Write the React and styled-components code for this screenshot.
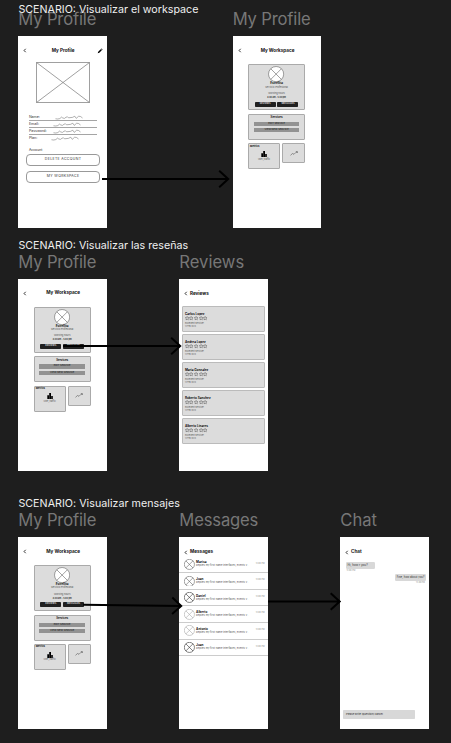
import React from 'react';
import styled, { createGlobalStyle } from 'styled-components';

const GlobalStyle = createGlobalStyle`
  * { box-sizing: border-box; }
  body { margin: 0; background: #1e1e1e; font-family: Inter, "Liberation Sans", sans-serif; }
  svg { display: block; flex: none; }
`;

const Canvas = styled.main`
  position: relative;
  width: 451px;
  height: 743px;
  overflow: hidden;
  background: #1e1e1e;
`;

const Scenario = styled.h2`
  position: absolute;
  left: 18.4px;
  top: ${(p) => p.$y}px;
  margin: 0;
  font-size: 10.7px;
  font-weight: 400;
  line-height: 14px;
  letter-spacing: ${(p) => p.$spacing ?? 0}px;
  color: #f0f0f0;
  white-space: nowrap;
`;

const Artboard = styled.section`
  position: absolute;
  left: ${(p) => p.$x}px;
  top: ${(p) => p.$y}px;
  width: 88.7px;
`;

const ArtboardName = styled.h3`
  margin: 0 0 7.3px;
  height: 20px;
  font-size: 16.6px;
  line-height: 20px;
  font-weight: 400;
  letter-spacing: ${(p) => p.$spacing || 0}px;
  color: #777;
  white-space: nowrap;
`;

const Screen = styled.div`
  display: flex;
  flex-direction: column;
  height: 192px;
  background: #fff;
  color: #111;
  overflow: hidden;
`;

const CenterHeader = styled.header`
  display: grid;
  grid-template-columns: 6px 1fr 6px;
  align-items: center;
  height: 10px;
  margin: 9.4px 4px 0 5px;
  text-align: center;
  font-size: 4.6px;
  line-height: 10px;
  font-weight: 700;
`;

const LeftHeader = styled.header`
  display: flex;
  align-items: center;
  gap: 1.7px;
  height: 10px;
  flex: none;
  margin: 10px 5px 0;
  font-size: 4.6px;
  line-height: 10px;
  font-weight: 700;
`;

const Photo = styled.div`
  margin: 6.1px 0 0 17.6px;
  height: 41px;
`;

const Fields = styled.div`
  margin: 11.6px 10px 0 10.6px;
`;

const Field = styled.div`
  display: flex;
  justify-content: space-between;
  align-items: center;
  height: 6.9px;
  padding-right: ${(p) => p.$inset}px;
  border-bottom: 1px solid ${(p) => (p.$last ? 'transparent' : '#a5a5a5')};
  font-size: 3.6px;
  line-height: 5px;
  color: #333;
`;

const SectionLabel = styled.div`
  margin: 6.3px 0 1.5px 10.6px;
  height: 4px;
  font-size: 3.4px;
  line-height: 4px;
  color: #222;
`;

const OutlineButton = styled.button`
  flex: none;
  width: 74px;
  height: 11.6px;
  margin: 0 0 5.6px 7.8px;
  padding: 0;
  border: 1px solid #999;
  border-radius: 4px;
  background: #fff;
  font: 400 3.5px/9px Inter, sans-serif;
  letter-spacing: 0.35px;
  color: #333;
  white-space: nowrap;
`;

const Dashboard = styled.div`
  display: flex;
  flex-direction: column;
  gap: 3.4px;
  width: 57px;
  margin: 8.6px 0 0 15.4px;
`;

const Card = styled.div`
  display: flex;
  flex-direction: column;
  align-items: center;
  width: ${(p) => p.$w || 57}px;
  height: ${(p) => p.$h}px;
  border: 1px solid #aaa;
  border-radius: 1px;
  background: #dcdcdc;
  white-space: nowrap;
`;

const AvatarSlot = styled.div`
  margin-top: 0.8px;
`;

const PersonName = styled.div`
  margin-top: -0.3px;
  font-size: 3px;
  line-height: 3.6px;
  font-weight: 700;
`;

const Tiny = styled.div`
  font-size: ${(p) => p.$size || 2.4}px;
  line-height: 3px;
  margin-top: ${(p) => p.$gap || 0}px;
  font-weight: ${(p) => (p.$strong ? 600 : 400)};
  color: ${(p) => (p.$strong ? '#222' : '#555')};
`;

const ActionRow = styled.div`
  display: flex;
  gap: 1.8px;
  margin-top: 2.6px;
`;

const DarkButton = styled.button`
  width: 21px;
  height: 4.9px;
  padding: 0;
  border: 0;
  border-radius: 0.7px;
  background: #202020;
  font: 600 2.4px/4.9px Inter, sans-serif;
  color: #ddd;
`;

const CardTitle = styled.div`
  margin: 0.6px 0 2.6px;
  font-size: 2.8px;
  line-height: 4px;
  font-weight: 700;
`;

const GrayButton = styled.button`
  width: 45.5px;
  height: 4.2px;
  margin-bottom: 2px;
  padding: 0;
  border: 0;
  background: #929292;
  font: 500 2.5px/4.2px Inter, sans-serif;
  color: #222;
`;

const Widgets = styled.div`
  display: flex;
  align-items: flex-start;
  justify-content: space-between;
`;

const WidgetTitle = styled.div`
  align-self: flex-start;
  margin: 0.5px 0 3.3px 1px;
  font-size: 2.5px;
  line-height: 3px;
  font-weight: 700;
`;

const Trend = styled.div`
  margin: auto;
`;

const ReviewList = styled.div`
  display: flex;
  flex-direction: column;
  gap: 2px;
  margin: 7.6px 2.8px 0;
`;

const Review = styled.article`
  height: 26px;
  padding: 4.8px 0 0 1.8px;
  border: 1px solid #bbb;
  border-radius: 1px;
  background: #dcdcdc;
  white-space: nowrap;
`;

const Reviewer = styled.div`
  font-size: 3.1px;
  line-height: 4px;
  font-weight: 700;
`;

const Stars = styled.div`
  display: flex;
  gap: 0.3px;
  margin: 0.2px 0 1.5px;
`;

const Message = styled.article`
  display: flex;
  align-items: center;
  height: 16.6px;
  flex: none;
  padding: 0 3.5px 0 4.5px;
  border-bottom: 1px solid #ccc;
  white-space: nowrap;
`;

const MessageBody = styled.div`
  flex: 1;
  min-width: 0;
  margin: 0 0 1px 1.5px;
`;

const MessageTime = styled.time`
  align-self: flex-start;
  margin-top: 5px;
  font-size: 2px;
  line-height: 3px;
  color: #888;
`;

const Inbox = styled.div`
  display: flex;
  flex-direction: column;
  margin-top: -0.6px;
`;

const Bubble = styled.div`
  align-self: ${(p) => (p.$mine ? 'flex-end' : 'flex-start')};
  width: ${(p) => (p.$mine ? 31 : 29)}px;
  height: 7px;
  margin: ${(p) => (p.$mine ? '1.3px 2.9px 0 0' : '4.4px 0 0 5.6px')};
  padding-left: 1.6px;
  border-radius: 1.3px;
  background: #d8d8d8;
  font-size: ${(p) => (p.$mine ? 2.75 : 3)}px;
  line-height: 7px;
  color: #333;
  white-space: nowrap;
`;

const Stamp = styled.time`
  align-self: ${(p) => (p.$mine ? 'flex-end' : 'flex-start')};
  margin: ${(p) => (p.$mine ? '0.7px 4.2px 0 0' : '0.7px 0 0 6.2px')};
  font-size: 2px;
  line-height: 3px;
  color: #888;
`;

const Composer = styled.div`
  width: 72.6px;
  height: 9.3px;
  margin: auto 0 10px 2.5px;
  padding-left: 3.2px;
  border-radius: 0.7px;
  background: #d8d8d8;
  font-size: 2.6px;
  line-height: 9.3px;
  color: #222;
`;

const Connectors = styled.svg`
  position: absolute;
  inset: 0;
  pointer-events: none;
`;

const Back = () => (
  <svg width="4" height="5" viewBox="0 0 4 5" fill="none" stroke="#000" strokeWidth="0.8">
    <path d="M2.7 .8 1.1 2.5 2.7 4.2" />
  </svg>
);

const Pencil = () => (
  <svg width="6" height="6" viewBox="0 0 6 6">
    <path d="M.7 5.3 1.2 3.7 3.7 1.2 4.8 2.3 2.3 4.8ZM4 .9 4.6.4 5.6 1.4 5.1 2Z" />
  </svg>
);

const Avatar = ({ size, color = '#666' }) => (
  <svg width={size} height={size} viewBox="0 0 16 16" fill="#fff" stroke={color} strokeWidth={size > 12 ? 0.6 : 0.9}>
    <circle cx="8" cy="8" r="7.5" />
    <path d="m2.7 2.7 10.6 10.6M13.3 2.7 2.7 13.3" />
  </svg>
);

const Squiggle = () => (
  <svg width="28" height="5" viewBox="0 0 29 5" fill="none" stroke="#777" strokeWidth="0.6">
    <path d="M.5 3.8Q3 4.5 5 3.6L7 2 8 3Q10 4.2 11.4 2.2L13 1.8 14 2.8 18 2.4 20.5 1.2 22 3.4 24.5 1.2 26.5 1.5 28.5 3" />
  </svg>
);

const Star = () => (
  <svg width="4.3" height="4.3" viewBox="0 0 10 10" fill="#eee" stroke="#333" strokeWidth="0.9">
    <path d="m5 .8 1.2 2.9 3.2.2-2.5 2 .8 3.1L5 7.3 2.3 9l.8-3.1-2.5-2 3.2-.2Z" />
  </svg>
);

const ScreenFrame = ({ name, x, y, spacing, children }) => (
  <Artboard $x={x} $y={y}>
    <ArtboardName $spacing={spacing}>{name}</ArtboardName>
    <Screen>{children}</Screen>
  </Artboard>
);

const fields = [['Name:', 14], ['Email:', 16], ['Password:', 16], ['Plan:', 17.5]];

const Profile = () => (
  <>
    <CenterHeader><Back /><span>My Profile</span><Pencil /></CenterHeader>
    <Photo>
      <svg width="54" height="41" viewBox="0 0 54 41" fill="none" stroke="#777" strokeWidth="0.7">
        <path d="M.5.5H53.5V40.5H.5ZL53.5 40.5M53.5.5.5 40.5" />
      </svg>
    </Photo>
    <Fields>
      {fields.map(([label, inset], i) => (
        <Field key={label} $inset={inset} $last={i === 3}><span>{label}</span><Squiggle /></Field>
      ))}
    </Fields>
    <SectionLabel>Account</SectionLabel>
    <OutlineButton>DELETE ACCOUNT</OutlineButton>
    <OutlineButton>MY WORKSPACE</OutlineButton>
  </>
);

const Workspace = () => (
  <>
    <CenterHeader><Back /><span>My Workspace</span><span /></CenterHeader>
    <Dashboard>
      <Card $h={46}>
        <AvatarSlot><Avatar size={16.2} /></AvatarSlot>
        <PersonName>Estrellita</PersonName>
        <Tiny>Servicio Profesional</Tiny>
        <Tiny $gap={3.3} $size={2.4}>Working hours</Tiny>
        <Tiny $gap={1} $size={2.1} $strong>8:00 am - 5:00 pm</Tiny>
        <ActionRow><DarkButton>REVIEWS</DarkButton><DarkButton>MESSAGES</DarkButton></ActionRow>
      </Card>
      <Card $h={26}>
        <CardTitle>Services</CardTitle>
        <GrayButton>EDIT SERVICE</GrayButton>
        <GrayButton>VIEW NEW SERVICE</GrayButton>
      </Card>
      <Widgets>
        <Card $w={32} $h={26}>
          <WidgetTitle>Metrics</WidgetTitle>
          <svg width="6" height="6" viewBox="0 0 6 6"><path d="M.3 2.2H2V6H.3ZM2.2 0H4V6H2.2ZM4.2 3H5.8V6H4.2Z" /></svg>
          <Tiny $gap={0.5} $size={2.3}>user_traffic</Tiny>
        </Card>
        <Card $w={23} $h={20}>
          <Trend>
            <svg width="8" height="5" viewBox="0 0 8 5" fill="none" stroke="#555" strokeWidth="0.6"><path d="M.5 4.3 2.5 2.5 4 3.3 6 1.3 7.4.8M5.8.7H7.4V2" /></svg>
          </Trend>
        </Card>
      </Widgets>
    </Dashboard>
  </>
);

const Reviews = () => (
  <>
    <LeftHeader><Back />Reviews</LeftHeader>
    <ReviewList>
      {['Carlos Lopez', 'Andrea Lopez', 'Maria Gonzalez', 'Roberto Sanchez', 'Alberto Linares'].map((name) => (
        <Review key={name}>
          <Reviewer>{name}</Reviewer>
          <Stars>{[0, 1, 2, 3, 4].map((n) => <Star key={n} />)}</Stars>
          <Tiny $size={2.3}>Excellent service!</Tiny>
          <Tiny $size={1.9} $gap={-0.6}>12 Feb 2023</Tiny>
        </Review>
      ))}
    </ReviewList>
  </>
);

const inbox = [
  ['Marisa', '#666'], ['Juan', '#666'], ['Daniel', '#333'],
  ['Alberto', '#aaa'], ['Antonio', '#aaa'], ['Juan', '#333'],
];

const Messages = () => (
  <>
    <LeftHeader><Back />Messages</LeftHeader>
    <Inbox>
      {inbox.map(([name, color], i) => (
        <Message key={i}>
          <Avatar size={10.8} color={color} />
          <MessageBody>
            <Reviewer>{name}</Reviewer>
            <Tiny $size={2.6}>Replies my first name interfaces, events v...</Tiny>
          </MessageBody>
          <MessageTime>12:00 PM</MessageTime>
        </Message>
      ))}
    </Inbox>
  </>
);

const Chat = () => (
  <>
    <LeftHeader><Back />Chat</LeftHeader>
    <Bubble>Hi, how r you?</Bubble>
    <Stamp>12:00 PM</Stamp>
    <Bubble $mine>Fine, how about you?</Bubble>
    <Stamp $mine>12:00 PM</Stamp>
    <Composer>Please write (question) cancel</Composer>
  </>
);

export default function App() {
  return (
    <>
      <GlobalStyle />
      <Canvas>
        <ScreenFrame name="My Profile" x={18.3} y={9.2} spacing={-0.15}><Profile /></ScreenFrame>
        <ScreenFrame name="My Profile" x={232.7} y={9.2} spacing={-0.15}><Workspace /></ScreenFrame>
        <ScreenFrame name="My Profile" x={18.3} y={251.6} spacing={-0.15}><Workspace /></ScreenFrame>
        <ScreenFrame name="Reviews" x={179.3} y={251.6}><Reviews /></ScreenFrame>
        <ScreenFrame name="My Profile" x={18.3} y={509.9} spacing={-0.15}><Workspace /></ScreenFrame>
        <ScreenFrame name="Messages" x={179.3} y={509.9} spacing={-0.15}><Messages /></ScreenFrame>
        <ScreenFrame name="Chat" x={340.3} y={509.9}><Chat /></ScreenFrame>
        <Scenario $y={3}>SCENARIO: Visualizar el workspace</Scenario>
        <Scenario $y={239}>SCENARIO: Visualizar las reseñas</Scenario>
        <Scenario $y={497} $spacing={0.03}>SCENARIO: Visualizar mensajes</Scenario>
        <Connectors width="451" height="743" fill="none" stroke="#000" strokeWidth="2">
          <path d="M102 179H228.2M219.2 170.8 228.2 179 219.2 187.2" />
          <path d="M63 346H180.2M171.2 337.8 180.2 346 171.2 354.2" />
          <path d="M83 604.8 181.2 606M172.3 597.6 181.2 606 172.1 614" />
          <path d="M268 601.5H339.7M330.7 593.3 339.7 601.5 330.7 609.7" />
        </Connectors>
      </Canvas>
    </>
  );
}
